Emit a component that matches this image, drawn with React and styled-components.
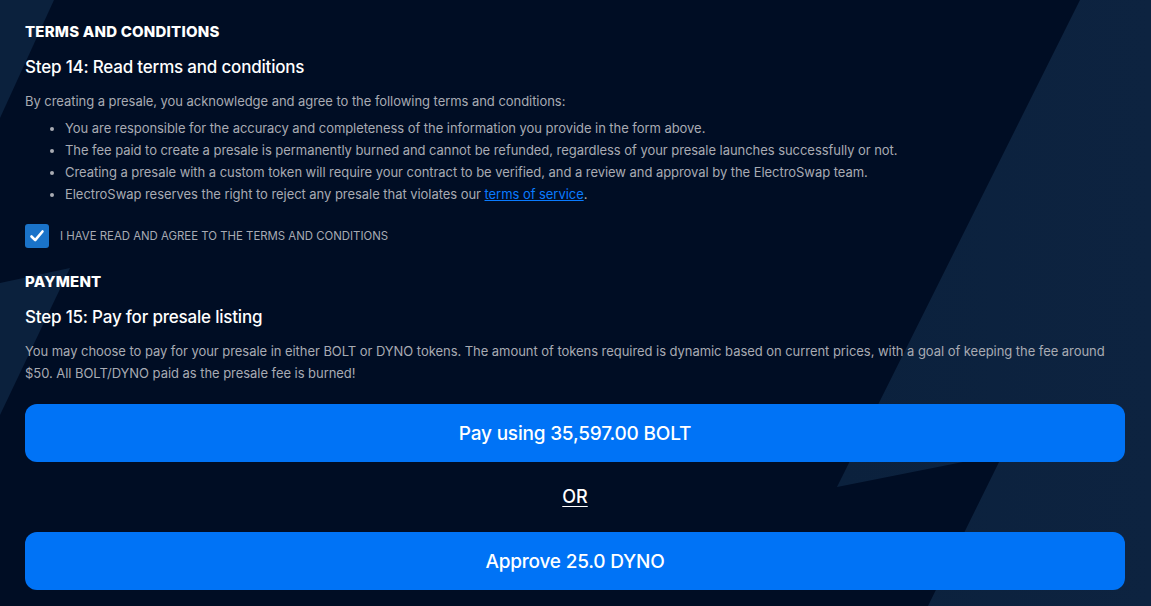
import React from "react";
import styled, { createGlobalStyle } from "styled-components";

const GlobalStyle = createGlobalStyle`
  html, body { margin: 0; padding: 0; background: #000d24; }
  body { font-family: Inter, "Noto Sans", "Liberation Sans", sans-serif; }
  * { box-sizing: border-box; }
`;

const Page = styled.div`
  position: relative;
  width: 1151px;
  height: 606px;
  overflow: hidden;
  background: #000d24;
`;

const Backdrop = styled.svg`
  position: absolute;
  inset: 0;
  width: 100%;
  height: 100%;
  z-index: 0;
`;

const Content = styled.main`
  position: relative;
  z-index: 1;
  display: flex;
  flex-direction: column;
  padding: 22px 26px 0 25px;
`;

const SectionTitle = styled.h2`
  margin: ${(p) => p.$mt || 0}px 0 0;
  font-size: 15px;
  line-height: 20px;
  font-weight: 800;
  color: #ffffff;
  letter-spacing: 0.2px;
`;

const StepTitle = styled.h3`
  margin: ${(p) => p.$mt || 0}px 0 0;
  font-size: 17px;
  line-height: 24px;
  font-weight: 500;
  color: #ffffff;
  letter-spacing: -0.2px;
`;

const Paragraph = styled.p`
  margin: ${(p) => p.$mt || 0}px 0 0;
  font-size: 13px;
  line-height: 22px;
  color: #a8abb3;
  letter-spacing: -0.05px;
`;

const List = styled.ul`
  margin: 5px 0 0;
  padding: 0 0 0 40px;
  font-size: 13px;
  line-height: 22px;
  color: #a8abb3;
  letter-spacing: -0.05px;
`;

const Item = styled.li``;

const Link = styled.a`
  color: #0a7bff;
  text-decoration: underline;
`;

const CheckRow = styled.label`
  display: flex;
  align-items: center;
  gap: 11px;
  margin-top: 19px;
  cursor: pointer;
`;

const CheckBox = styled.span`
  display: flex;
  align-items: center;
  justify-content: center;
  width: 24px;
  height: 24px;
  border-radius: 3px;
  background: #1a73c9;
`;

const CheckLabel = styled.span`
  font-size: 11.4px;
  line-height: 16px;
  color: #a8abb3;
  text-transform: uppercase;
  letter-spacing: 0;
`;

const ActionButton = styled.button`
  display: flex;
  align-items: center;
  justify-content: center;
  width: 100%;
  height: 58px;
  margin-top: ${(p) => p.$mt || 0}px;
  border: none;
  border-radius: 12px;
  background: #0073f6;
  color: #ffffff;
  font-family: inherit;
  font-size: 19px;
  font-weight: 500;
  letter-spacing: -0.2px;
  cursor: pointer;
`;

const Or = styled.div`
  margin-top: 23px;
  text-align: center;
  font-size: 18px;
  line-height: 24px;
  font-weight: 500;
  color: #ffffff;
  text-decoration: underline;
  text-underline-offset: 3px;
`;

export default function App() {
  return (
    <>
      <GlobalStyle />
      <Page>
        <Backdrop viewBox="0 0 1151 606" preserveAspectRatio="none">
          <defs>
            <linearGradient id="boltFill" x1="0" y1="0" x2="1" y2="0">
              <stop offset="0" stopColor="#0b213d" />
              <stop offset="1" stopColor="#0d2340" />
            </linearGradient>
          </defs>
          <polygon points="1080,0 1151,0 1151,606 928,606 1003,454 837,487" fill="url(#boltFill)" />
          <polygon points="0,0 54,0 0,118" fill="#0b213d" />
          <polygon points="0,283 70,268 0,415" fill="#0b213d" />
        </Backdrop>
        <Content>
          <SectionTitle>TERMS AND CONDITIONS</SectionTitle>
          <StepTitle $mt={13}>Step 14: Read terms and conditions</StepTitle>
          <Paragraph $mt={11}>
            By creating a presale, you acknowledge and agree to the following terms and conditions:
          </Paragraph>
          <List>
            <Item>You are responsible for the accuracy and completeness of the information you provide in the form above.</Item>
            <Item>The fee paid to create a presale is permanently burned and cannot be refunded, regardless of your presale launches successfully or not.</Item>
            <Item>Creating a presale with a custom token will require your contract to be verified, and a review and approval by the ElectroSwap team.</Item>
            <Item>
              ElectroSwap reserves the right to reject any presale that violates our <Link href="#">terms of service</Link>.
            </Item>
          </List>
          <CheckRow>
            <CheckBox>
              <svg width="18" height="18" viewBox="0 0 18 18">
                <polyline points="3.5,9.5 7.2,13.2 14.5,4.5" fill="none" stroke="#ffffff" strokeWidth="2.6" strokeLinecap="round" strokeLinejoin="round" />
              </svg>
            </CheckBox>
            <CheckLabel>I have read and agree to the terms and conditions</CheckLabel>
          </CheckRow>
          <SectionTitle $mt={24}>PAYMENT</SectionTitle>
          <StepTitle $mt={13}>Step 15: Pay for presale listing</StepTitle>
          <Paragraph $mt={11}>
            You may choose to pay for your presale in either BOLT or DYNO tokens. The amount of tokens required is dynamic based on current prices, with a goal of keeping the fee around $50. All BOLT/DYNO paid as the presale fee is burned!
          </Paragraph>
          <ActionButton $mt={20}>Pay using 35,597.00 BOLT</ActionButton>
          <Or>OR</Or>
          <ActionButton $mt={23}>Approve 25.0 DYNO</ActionButton>
        </Content>
      </Page>
    </>
  );
}
